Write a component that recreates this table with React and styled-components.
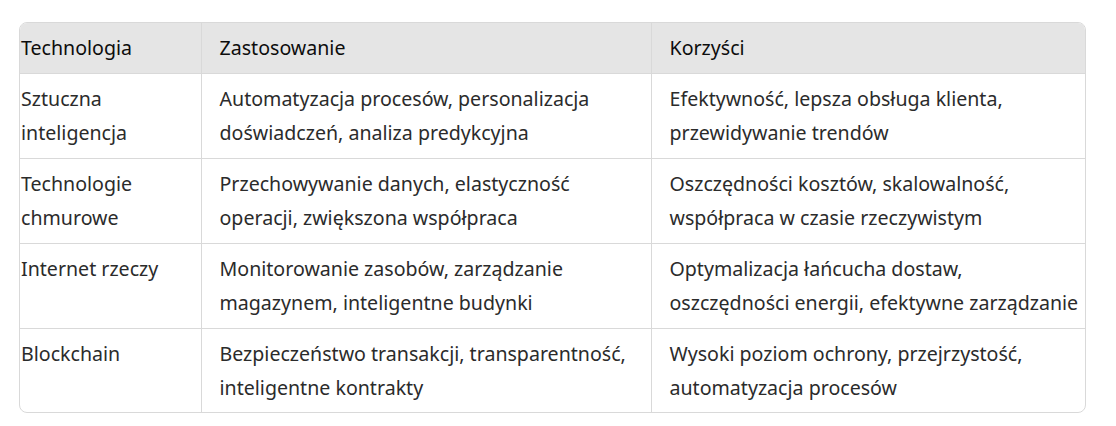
import React from 'react';
import styled, { createGlobalStyle } from 'styled-components';

const GlobalStyle = createGlobalStyle`
body {
  margin: 0;
  background: #fff;
  font-family: "Noto Sans", "Open Sans", sans-serif;
}
`;

const Page = styled.div`
padding: 22px 0 0 19px;
`;

const Frame = styled.div`
width: 1067px;
box-sizing: border-box;
border: 1px solid #d9d9d9;
border-radius: 8px;
overflow: hidden;
`;

const Table = styled.table`
width: 100%;
border-collapse: collapse;
table-layout: fixed;
font-size: 19.6px;
line-height: 34px;
`;

const Head = styled.th`
background: #e5e5e5;
color: #0d0d0d;
font-weight: 400;
text-align: left;
padding: 8px 4px 8px 18px;
border-left: 1px solid #d9d9d9;
&:first-child {
  border-left: none;
  padding-left: 1px;
}
`;

const Cell = styled.td`
color: #2b2b2b;
vertical-align: top;
white-space: nowrap;
padding: 8px 4px 8px 18px;
border-left: 1px solid #d9d9d9;
border-top: 1px solid #d9d9d9;
&:first-child {
  border-left: none;
  padding-left: 1px;
}
tr:last-child > & {
  padding-bottom: 7px;
}
`;

const rows = [
  [['Sztuczna', 'inteligencja'], ['Automatyzacja procesów, personalizacja', 'doświadczeń, analiza predykcyjna'], ['Efektywność, lepsza obsługa klienta,', 'przewidywanie trendów']],
  [['Technologie', 'chmurowe'], ['Przechowywanie danych, elastyczność', 'operacji, zwiększona współpraca'], ['Oszczędności kosztów, skalowalność,', 'współpraca w czasie rzeczywistym']],
  [['Internet rzeczy'], ['Monitorowanie zasobów, zarządzanie', 'magazynem, inteligentne budynki'], ['Optymalizacja łańcucha dostaw,', 'oszczędności energii, efektywne zarządzanie']],
  [['Blockchain'], ['Bezpieczeństwo transakcji, transparentność,', 'inteligentne kontrakty'], ['Wysoki poziom ochrony, przejrzystość,', 'automatyzacja procesów']],
];

export default function App() {
  return (
    <>
      <GlobalStyle />
      <Page>
        <Frame>
          <Table>
            <colgroup>
              <col style={{ width: 181 }} />
              <col style={{ width: 450 }} />
              <col />
            </colgroup>
            <thead>
              <tr>
                <Head>Technologia</Head>
                <Head>Zastosowanie</Head>
                <Head>Korzyści</Head>
              </tr>
            </thead>
            <tbody>
              {rows.map((r) => (
                <tr key={r[0][0]}>
                  {r.map((lines) => (
                    <Cell key={lines[0]}>
                      {lines.map((l, i) => (
                        <React.Fragment key={l}>
                          {i > 0 && <br />}
                          {l}
                        </React.Fragment>
                      ))}
                    </Cell>
                  ))}
                </tr>
              ))}
            </tbody>
          </Table>
        </Frame>
      </Page>
    </>
  );
}
